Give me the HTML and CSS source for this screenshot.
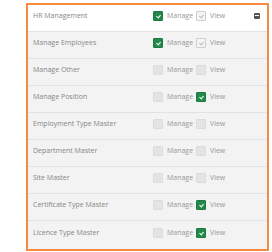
FILE: index.html
```html
<!DOCTYPE html>
<html lang="en">
<head>
  <meta charset="UTF-8" />
  <title>Permissions</title>
  <link rel="stylesheet" href="styles.css">
</head>
<body>
  <div class="perm-box">
    <div class="perm-row head">
      <span class="label">HR Management</span>
      <span class="opt"><i class="check on"></i>Manage</span>
      <span class="opt"><i class="check dim"></i>View</span>
      <span class="collapse"></span>
    </div>
    <div class="perm-row">
      <span class="label">Manage Employees</span>
      <span class="opt"><i class="check on"></i>Manage</span>
      <span class="opt"><i class="check dim"></i>View</span>
    </div>
    <div class="perm-row">
      <span class="label">Manage Other</span>
      <span class="opt"><i class="check"></i>Manage</span>
      <span class="opt"><i class="check"></i>View</span>
    </div>
    <div class="perm-row">
      <span class="label">Manage Position</span>
      <span class="opt"><i class="check"></i>Manage</span>
      <span class="opt"><i class="check on"></i>View</span>
    </div>
    <div class="perm-row">
      <span class="label">Employment Type Master</span>
      <span class="opt"><i class="check"></i>Manage</span>
      <span class="opt"><i class="check"></i>View</span>
    </div>
    <div class="perm-row">
      <span class="label">Department Master</span>
      <span class="opt"><i class="check"></i>Manage</span>
      <span class="opt"><i class="check"></i>View</span>
    </div>
    <div class="perm-row">
      <span class="label">Site Master</span>
      <span class="opt"><i class="check"></i>Manage</span>
      <span class="opt"><i class="check"></i>View</span>
    </div>
    <div class="perm-row">
      <span class="label">Certificate Type Master</span>
      <span class="opt"><i class="check"></i>Manage</span>
      <span class="opt"><i class="check on"></i>View</span>
    </div>
    <div class="perm-row">
      <span class="label">Licence Type Master</span>
      <span class="opt"><i class="check"></i>Manage</span>
      <span class="opt"><i class="check on"></i>View</span>
    </div>
  </div>
</body>
</html>
```

FILE: styles.css
```css
body {
  margin: 0;
  background: #fff;
  font-family: 'Open Sans', sans-serif;
  color: #888;
}
.perm-box {
  box-sizing: border-box;
  width: 243px;
  margin: 3px 0 0 26px;
  border: 2px solid #f58b3f;
  background: #f3f3f3;
}
.perm-row {
  box-sizing: border-box;
  height: 27px;
  display: grid;
  grid-template-columns: 120px 43px 58px 1fr;
  align-items: center;
  padding: 0 0 5px 5px;
  border-bottom: 1px solid #dde4e8;
  font-size: 7px;
}
.perm-row:last-child {
  border-bottom: none;
  height: 28px;
}
.perm-row.head {
  background: #fff;
}
.label {
  color: #868686;
}
.opt {
  display: flex;
  align-items: center;
  gap: 4px;
  color: #989898;
}
.check {
  box-sizing: border-box;
  width: 10px;
  height: 10px;
  border: 1px solid #dcdcdc;
  background: #e4e4e4;
  border-radius: 1px;
  position: relative;
}
.check.on {
  background: #21894a;
  border-color: #1d7a41;
}
.check.dim {
  background: #f4f4f4;
  border-color: #cfcfcf;
}
.check.on::after,
.check.dim::after {
  content: "";
  position: absolute;
  left: 3px;
  top: 2px;
  width: 2px;
  height: 3px;
  border: solid #fff;
  border-width: 0 1px 1px 0;
  transform: rotate(40deg);
}
.check.dim::after {
  border-color: #bcbcbc;
}
.collapse {
  justify-self: end;
  margin-right: 8px;
  width: 6px;
  height: 6px;
  border-radius: 1px;
  background: #555;
  position: relative;
}
.collapse::after {
  content: "";
  position: absolute;
  left: 1px;
  right: 1px;
  top: 2.5px;
  height: 1px;
  background: #fff;
}
```
